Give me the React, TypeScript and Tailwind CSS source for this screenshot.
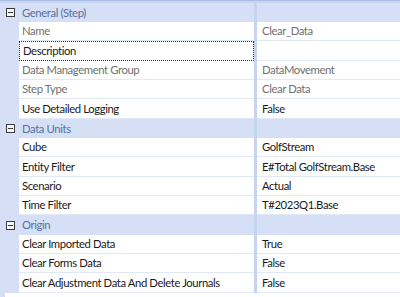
type Row = { label?: string; value?: string; header?: string; dim?: boolean; focus?: boolean };

const rows: Row[] = [
  { header: "General (Step)" },
  { label: "Name", value: "Clear_Data", dim: true },
  { label: "Description", value: "", focus: true },
  { label: "Data Management Group", value: "DataMovement", dim: true },
  { label: "Step Type", value: "Clear Data", dim: true },
  { label: "Use Detailed Logging", value: "False" },
  { header: "Data Units" },
  { label: "Cube", value: "GolfStream" },
  { label: "Entity Filter", value: "E#Total GolfStream.Base" },
  { label: "Scenario", value: "Actual" },
  { label: "Time Filter", value: "T#2023Q1.Base" },
  { header: "Origin" },
  { label: "Clear Imported Data", value: "True" },
  { label: "Clear Forms Data", value: "False" },
  { label: "Clear Adjustment Data And Delete Journals", value: "False" },
];

const MinusBox = () => (
  <svg width="9" height="9" viewBox="0 0 9 9" className="block">
    <rect x="0.5" y="0.5" width="8" height="8" fill="#f4f6fb" stroke="#3c3c3c" />
    <rect x="2" y="4" width="5" height="1" fill="#3c3c3c" />
  </svg>
);

export default function App() {
  return (
    <div
      className="w-[400px] h-[297px] overflow-hidden bg-white text-[11.3px] tracking-[-0.4px] leading-none"
      style={{ fontFamily: 'Lato, "Noto Sans", sans-serif' }}
    >
      <div className="h-[3px] border-t border-[#a9bce4] bg-[#c9d6f1]" />
      {rows.map((r, i) => {
        const h = i % 3 === 2 ? "h-[20px]" : "h-[19px]";
        if (r.header) {
          return (
            <div key={i} className={`flex ${h} bg-[#d5e0f6]`}>
              <div className="w-[19px] flex items-center justify-center pl-[2px]">
                <MinusBox />
              </div>
              <div className="w-[235px] flex items-center pl-[3px] text-[#5570a3]">{r.header}</div>
              <div className="w-[3px] bg-[#c6d4f0]" />
              <div className="flex-1" />
            </div>
          );
        }
        return (
          <div key={i} className={`flex ${h}`}>
            <div className="w-[19px] bg-[#d5e0f6]" />
            <div
              className={`w-[235px] flex items-center pl-[3px] whitespace-nowrap overflow-hidden ${
                r.focus ? "border border-dotted border-[#333] pl-[2px]" : "border-b border-[#e2e9f6]"
              } ${r.dim ? "text-[#707070]" : "text-[#1a1a1a]"}`}
            >
              {r.label}
            </div>
            <div className="w-[3px] bg-[#c6d4f0]" />
            <div
              className={`flex-1 flex items-center pl-[5px] whitespace-nowrap border-b border-[#e2e9f6] ${
                r.dim ? "text-[#707070]" : "text-[#1a1a1a]"
              }`}
            >
              {r.value}
            </div>
          </div>
        );
      })}
      <div className="flex h-[4px]">
        <div className="w-[5px] bg-[#d5e0f6]" />
        <div className="flex-1" />
      </div>
    </div>
  );
}
